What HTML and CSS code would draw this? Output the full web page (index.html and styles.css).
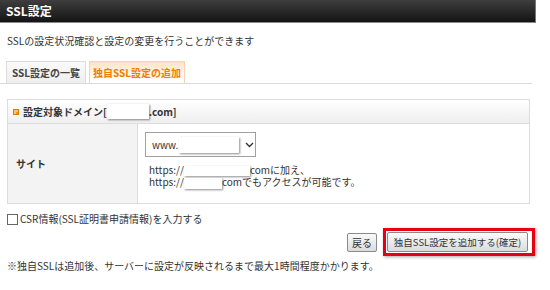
FILE: index.html
```html
<!DOCTYPE html>
<html lang="ja">
<head>
<meta charset="utf-8">
<link rel="stylesheet" href="styles.css">
</head>
<body>
<div class="titlebar">SSL設定</div>
<div class="content">
  <p class="desc">SSLの設定状況確認と設定の変更を行うことができます</p>
  <div class="tabs">
    <span class="tab">SSL設定の一覧</span>
    <span class="tab active">独自SSL設定の追加</span>
  </div>
  <div class="panel">
    <div class="panel-head"><span class="sq"></span>設定対象ドメイン[<span class="redact r-head"></span>.com]</div>
    <div class="row">
      <div class="label">サイト</div>
      <div class="field">
        <div class="select">
          <span class="www">www.</span><span class="redact r-sel"></span>
          <svg class="chev" width="9" height="6" viewBox="0 0 9 6"><path d="M1 1 L4.5 4.5 L8 1" fill="none" stroke="#333" stroke-width="1.4"/></svg>
        </div>
        <div class="hint">
          <div>https://<span class="redact r-l1"></span>comに加え、</div>
          <div>https://<span class="redact r-l2"></span>comでもアクセスが可能です。</div>
        </div>
      </div>
    </div>
  </div>
  <label class="check"><span class="box"></span>CSR情報(SSL証明書申請情報)を入力する</label>
  <div class="actions">
    <button class="btn back">戻る</button>
    <span class="highlight"><button class="btn main">独自SSL設定を追加する(確定)</button></span>
  </div>
  <p class="note">※独自SSLは追加後、サーバーに設定が反映されるまで最大1時間程度かかります。</p>
</div>
</body>
</html>
```
FILE: styles.css
```css
* { box-sizing: border-box; }
body {
  margin: 0;
  background: #fff;
  font-family: "Noto Sans CJK JP", "Noto Sans", sans-serif;
  font-size: 10px;
  color: #333;
}
.titlebar {
  width: 536px;
  height: 23px;
  background: linear-gradient(#3e3e3e, #141414);
  border-right: 1px solid #777;
  border-bottom: 1px solid #888;
  color: #fff;
  font-weight: bold;
  font-size: 12px;
  line-height: 22px;
  padding-left: 6px;
}
.content { padding-left: 7px; }
.desc {
  margin: 11px 0 0;
  line-height: 14px;
}
.tabs {
  margin: 13px 0 0 -7px;
  padding-left: 6px;
  width: 532px;
  display: flex;
  gap: 3px;
  border-bottom: 1px solid #d9d9d9;
}
.tab {
  height: 22px;
  line-height: 21px;
  font-weight: bold;
  text-align: center;
  border: 1px solid #dcdcdc;
  border-bottom: none;
  background: linear-gradient(#fafafa, #eeeeee);
  color: #444;
  width: 80px;
}
.tab.active {
  width: 96px;
  color: #f27c00;
  border-color: #f3d3b0;
  background: linear-gradient(#fde3c6, #ffffff 85%);
}
.panel {
  margin-top: 15px;
  width: 523px;
  border: 1px solid #dcdcdc;
}
.panel-head {
  height: 24px;
  display: flex;
  align-items: center;
  padding-left: 5px;
  font-weight: bold;
  background: linear-gradient(#ffffff, #efefef);
  border-bottom: 1px solid #dcdcdc;
}
.sq {
  width: 6px;
  height: 6px;
  background: #f39800;
  box-shadow: inset 0 0 0 1px #e07a00, inset 1px 1px 0 2px #fcc070;
  margin-right: 4px;
}
.redact {
  display: inline-block;
  background: #fff;
  box-shadow: 1px 1px 2px rgba(0,0,0,0.45);
  vertical-align: middle;
}
.r-head { width: 42px; height: 15px; }
.row {
  display: flex;
  height: 79px;
}
.label {
  width: 130px;
  background: #f3f3f3;
  border-right: 1px solid #dcdcdc;
  font-weight: bold;
  display: flex;
  align-items: center;
  padding-left: 8px;
}
.field { padding: 8px 0 0 7px; }
.select {
  width: 111px;
  height: 25px;
  border: 1px solid #a0a0a0;
  display: flex;
  align-items: center;
  padding-left: 6px;
}
.r-sel { width: 60px; height: 16px; margin-left: 1px; }
.chev { margin-left: 6px; }
.hint {
  margin: 7px 0 0 4px;
  line-height: 12px;
}
.r-l1 { width: 66px; height: 10px; }
.r-l2 { width: 38px; height: 11px; }
.check {
  display: flex;
  align-items: center;
  margin-top: 8px;
  height: 14px;
  line-height: 14px;
}
.box {
  width: 11px;
  height: 11px;
  border: 1px solid #666;
  background: #fff;
  margin-right: 2px;
}
.actions {
  margin-top: 2px;
  width: 528px;
  display: flex;
  justify-content: flex-end;
  align-items: center;
  gap: 6px;
}
.btn {
  font-family: "Noto Sans CJK JP", "Noto Sans", sans-serif;
  font-size: 10px;
  color: #333;
  border: 1px solid #8a8a8a;
  border-radius: 2px;
  background: linear-gradient(#fafafa, #dcdcdc);
  padding: 0;
}
.back { width: 30px; height: 19px; }
.highlight {
  display: flex;
  border: 3px solid #e60012;
  padding: 1px 4px 1px 1px;
  box-shadow: 1px 1px 3px rgba(0,0,0,0.35);
}
.main { width: 141px; height: 20px; font-size: 9.5px; }
.note {
  margin: 3px 0 0;
  line-height: 14px;
}
```
